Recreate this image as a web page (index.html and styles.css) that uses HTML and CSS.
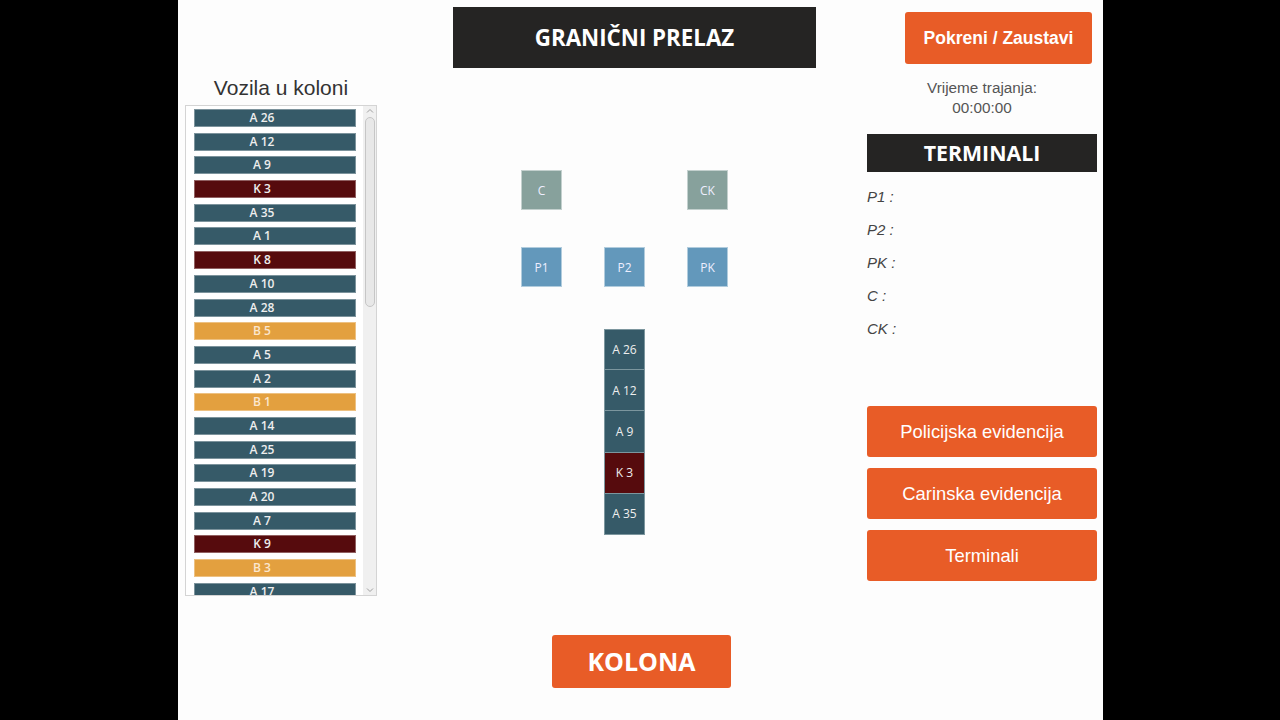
FILE: index.html
```html
<!DOCTYPE html>
<html lang="sr">
<head>
<meta charset="utf-8">
<title>Granični prelaz</title>
<link rel="stylesheet" href="styles.css">
</head>
<body>
<div class="app">
  <section class="col-left">
    <h2 class="list-title">Vozila u koloni</h2>
    <div class="listbox">
      <div class="list-items">
        <div class="veh a">A 26</div>
        <div class="veh a">A 12</div>
        <div class="veh a">A 9</div>
        <div class="veh k">K 3</div>
        <div class="veh a">A 35</div>
        <div class="veh a">A 1</div>
        <div class="veh k">K 8</div>
        <div class="veh a">A 10</div>
        <div class="veh a">A 28</div>
        <div class="veh b">B 5</div>
        <div class="veh a">A 5</div>
        <div class="veh a">A 2</div>
        <div class="veh b">B 1</div>
        <div class="veh a">A 14</div>
        <div class="veh a">A 25</div>
        <div class="veh a">A 19</div>
        <div class="veh a">A 20</div>
        <div class="veh a">A 7</div>
        <div class="veh k">K 9</div>
        <div class="veh b">B 3</div>
        <div class="veh a">A 17</div>
      </div>
      <div class="scrollbar">
        <svg class="arrow" width="12" height="10" viewBox="0 0 12 10"><path d="M3 6.5 L6 3.5 L9 6.5" fill="none" stroke="#a0a0a0" stroke-width="1"/></svg>
        <div class="track"><div class="thumb"></div></div>
        <svg class="arrow" width="12" height="10" viewBox="0 0 12 10"><path d="M3 3.5 L6 6.5 L9 3.5" fill="none" stroke="#a0a0a0" stroke-width="1"/></svg>
      </div>
    </div>
  </section>

  <section class="col-center">
    <h1 class="title-bar">GRANIČNI PRELAZ</h1>
    <div class="terminals">
      <div class="node c">C</div>
      <div class="node empty"></div>
      <div class="node c">CK</div>
      <div class="node p">P1</div>
      <div class="node p">P2</div>
      <div class="node p">PK</div>
    </div>
    <div class="stack">
      <div class="cell a">A 26</div>
      <div class="cell a">A 12</div>
      <div class="cell a">A 9</div>
      <div class="cell k">K 3</div>
      <div class="cell a">A 35</div>
    </div>
    <button class="kolona">KOLONA</button>
  </section>

  <section class="col-right">
    <button class="start">Pokreni / Zaustavi</button>
    <div class="timer">
      <div>Vrijeme trajanja:</div>
      <div>00:00:00</div>
    </div>
    <h2 class="term-bar">TERMINALI</h2>
    <ul class="term-list">
      <li>P1 :</li>
      <li>P2 :</li>
      <li>PK :</li>
      <li>C :</li>
      <li>CK :</li>
    </ul>
    <div class="actions">
      <button class="act">Policijska evidencija</button>
      <button class="act">Carinska evidencija</button>
      <button class="act">Terminali</button>
    </div>
  </section>
</div>
</body>
</html>
```

FILE: styles.css
```css
* { box-sizing: border-box; }
html, body { margin: 0; padding: 0; }
body {
  background: #000;
  width: 1280px;
  height: 720px;
  overflow: hidden;
  font-family: "Liberation Sans", Arial, sans-serif;
}
.app {
  margin-left: 178px;
  width: 925px;
  height: 720px;
  background: #fdfdfd;
  display: flex;
}

/* left column */
.col-left {
  width: 275px;
  padding-left: 7px;
  padding-top: 75px;
}
.list-title {
  width: 192px;
  margin: 0;
  text-align: center;
  font-weight: normal;
  font-size: 21px;
  line-height: 25px;
  color: #333;
}
.listbox {
  margin-top: 5px;
  width: 192px;
  height: 491px;
  border: 1px solid #d4d4d4;
  display: flex;
  overflow: hidden;
  background: #fff;
}
.list-items {
  padding: 3px 0 0 8px;
  width: 178px;
}
.veh {
  width: 162px;
  height: 18px;
  margin-bottom: 5.7px;
  padding-right: 26px;
  color: #eee;
  font-family: "Open Sans", sans-serif;
  font-weight: 600;
  font-size: 12px;
  line-height: 16px;
  text-align: center;
  border: 1px solid rgba(255,255,255,0.35);
}
.veh.a { background: #365a68; }
.veh.k { background: #560b0d; }
.veh.b { background: #e3a03f; color: #fbe7cf; }

.scrollbar {
  width: 13px;
  margin-left: auto;
  background: #f0f0f0;
  display: flex;
  flex-direction: column;
  align-items: center;
}
.arrow { display: block; }
.track {
  flex: 1;
  width: 12px;
  padding: 1px 1px;
}
.thumb {
  height: 190px;
  background: #e8e8e8;
  border: 1px solid #c6c6c6;
  border-radius: 5px;
}

/* center column */
.col-center {
  width: 363px;
  padding-top: 7px;
}
.title-bar {
  margin: 0;
  height: 61px;
  background: #252423;
  color: #fff;
  font-family: "Open Sans", sans-serif;
  font-weight: 700;
  font-size: 22.3px;
  line-height: 61px;
  text-align: center;
}
.terminals {
  margin: 102px 0 0 68px;
  display: grid;
  grid-template-columns: 41px 41px 41px;
  grid-auto-rows: 40px;
  column-gap: 42px;
  row-gap: 37px;
}
.node {
  color: #eef;
  font-family: "Open Sans", sans-serif;
  font-size: 12px;
  display: flex;
  align-items: center;
  justify-content: center;
  border: 1px solid rgba(255,255,255,0.5);
}
.node.c { background: #87a19c; }
.node.p { background: #6398bb; }
.node.empty { border: none; background: transparent; }

.stack {
  margin: 42px 0 0 151px;
  width: 41px;
}
.cell {
  height: 41.2px;
  color: #eee;
  font-family: "Open Sans", sans-serif;
  font-size: 12px;
  display: flex;
  align-items: center;
  justify-content: center;
  border: 1px solid #7c969e;
  border-top-width: 0;
}
.cell:first-child { border-top-width: 1px; }
.cell.a { background: #365a68; }
.cell.k { background: #560b0d; }

.kolona {
  display: block;
  margin: 100px 0 0 99px;
  width: 179px;
  height: 53px;
  background: #e85c27;
  color: #fff;
  border: none;
  border-radius: 3px;
  font-family: "Open Sans", sans-serif;
  font-weight: 700;
  font-size: 25px;
  padding: 0;
}

/* right column */
.col-right {
  width: 287px;
  padding-left: 51px;
  padding-top: 12px;
}
.start {
  display: block;
  margin-left: 38px;
  width: 187px;
  height: 52px;
  background: #e85c27;
  color: #fff;
  border: none;
  border-radius: 3px;
  font-family: "Liberation Sans", Arial, sans-serif;
  font-weight: 700;
  font-size: 17.5px;
  padding: 0;
}
.timer {
  width: 230px;
  margin-top: 14px;
  text-align: center;
  color: #555;
  font-size: 15.3px;
  line-height: 20px;
}
.term-bar {
  margin: 16px 0 0 0;
  width: 230px;
  height: 38px;
  background: #252423;
  color: #fff;
  font-family: "Open Sans", sans-serif;
  font-weight: 700;
  font-size: 21.3px;
  line-height: 38px;
  text-align: center;
}
.term-list {
  list-style: none;
  margin: 15px 0 0 0;
  padding: 0;
}
.term-list li {
  height: 33px;
  font-style: italic;
  font-size: 15px;
  line-height: 20px;
  color: #444;
}
.actions {
  margin-top: 54px;
  display: flex;
  flex-direction: column;
  gap: 11px;
}
.act {
  width: 230px;
  height: 51px;
  background: #e85c27;
  color: #fff;
  border: none;
  border-radius: 3px;
  font-family: "Liberation Sans", Arial, sans-serif;
  font-size: 18.4px;
  padding: 0;
}
```
